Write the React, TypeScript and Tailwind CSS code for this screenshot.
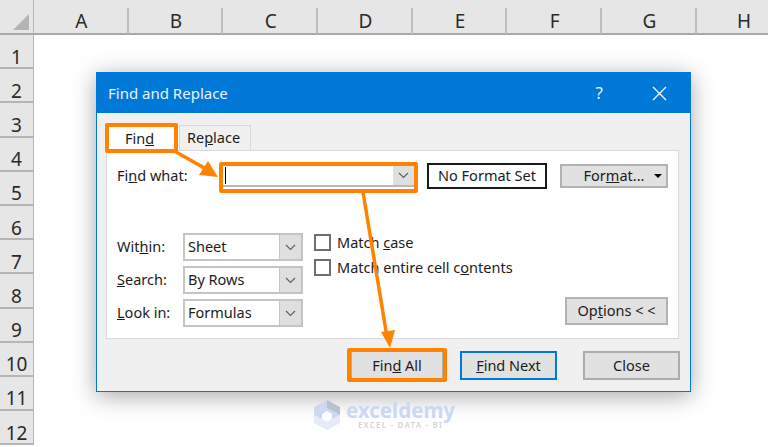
const FONT = "font-['Noto_Sans','Open_Sans',sans-serif]";

const COLS = ["A", "B", "C", "D", "E", "F", "G", "H"];
const ROWS = ["1", "2", "3", "4", "5", "6", "7", "8", "9", "10", "11", "12"];

function Chevron() {
  return (
    <svg width="11" height="7" viewBox="0 0 11 7" fill="none" stroke="#606060" strokeWidth="1.2">
      <path d="M1 1l4.5 4.5L10 1" />
    </svg>
  );
}

function Combo({ value }: { value: string }) {
  return (
    <div className="flex h-[28px] w-[120px] border-2 border-[#c4c4c4] bg-white">
      <div className="flex flex-1 items-center border-r border-[#c4c4c4] pl-[3px] text-[14.5px] text-[#1c1c1c]">{value}</div>
      <div className="flex w-[21px] items-center justify-center bg-[#dfdfdf]">
        <Chevron />
      </div>
    </div>
  );
}

function Check({ children }: { children: React.ReactNode }) {
  return (
    <div className="flex h-[17px] items-center gap-[6px] text-[14.5px] text-[#1c1c1c]">
      <div className="h-[17px] w-[17px] border-2 border-[#6f6f6f] bg-white" />
      <span className="whitespace-nowrap">{children}</span>
    </div>
  );
}

function Btn({ children, className }: { children: React.ReactNode; className: string }) {
  return (
    <div className={`flex items-center justify-center bg-[#e1e1e1] text-[14.5px] text-[#1c1c1c] ${className}`}>
      <span className="whitespace-nowrap">{children}</span>
    </div>
  );
}

function OptionRow({ label, value }: { label: React.ReactNode; value: string }) {
  return (
    <div className="flex items-center">
      <div className="w-[66px] text-[14.5px] text-[#1c1c1c]">{label}</div>
      <Combo value={value} />
    </div>
  );
}

export default function App() {
  return (
    <div className={`relative h-[447px] w-[768px] overflow-hidden bg-white ${FONT}`}>
      <div className="flex h-[35px] border-b-2 border-[#a9a9a9] bg-[#e6e6e6]">
        <div className="relative w-[34px] shrink-0 border-r border-[#b5b5b5]">
          <svg className="absolute left-[12px] top-[13px]" width="18" height="18" viewBox="0 0 18 18">
            <path d="M17 1v16H1z" fill="#b4b4b4" />
          </svg>
        </div>
        {COLS.map((c) => (
          <div key={c} className="flex w-[94.7px] shrink-0 items-center justify-center pt-[9px] text-[19px] leading-[24px] text-[#2a2a2a]">
            {c}
          </div>
        ))}
      </div>
      <div className="absolute left-[34px] top-[8px] flex h-[26px]">
        {COLS.map((c) => (
          <div key={c} className="h-full w-[94.7px] shrink-0 border-r-2 border-[#bdbdbd]" />
        ))}
      </div>

      <div className="flex w-[34px] flex-col">
        {ROWS.map((r) => (
          <div key={r} className="flex h-[34.2px] shrink-0 items-center justify-center border-b-2 border-r border-[#b5b5b5] bg-[#e6e6e6] pt-[11px] text-[19px] leading-[20px] text-[#2a2a2a]">
            {r}
          </div>
        ))}
      </div>

      {/* Dialog window */}
      <div className="absolute left-[96px] top-[72px] flex h-[320px] w-[595px] flex-col border border-[#0078d7] bg-[#f0f0f0] text-[#1c1c1c] shadow-[0_4px_22px_rgba(0,0,0,0.35)]">
        <div className="flex h-[40px] shrink-0 items-center bg-[#0078d7] pl-[11px] text-[15px] text-[#e8f2fb]">
          <span className="flex-1">Find and Replace</span>
          <span className="mr-[49px] text-[17px]">?</span>
          <svg className="mr-[23px]" width="15" height="15" viewBox="0 0 15 15" stroke="#f1f7fc" strokeWidth="1.4">
            <path d="M1 1l13 13M14 1L1 14" />
          </svg>
        </div>

        <div className="mt-[12px] flex h-[25px] shrink-0 pl-[10px]">
          <div className="flex w-[72px] items-center justify-center bg-white pr-[7px] pt-[2px] text-[14.5px]">
            <span>Fin<u>d</u></span>
          </div>
          <div className="flex w-[72px] items-center justify-center border border-b-0 border-[#d9d9d9] pr-[3px] text-[14.5px]">
            <span>Re<u>p</u>lace</span>
          </div>
        </div>

        <div className="ml-[9px] mr-[11px] flex h-[189px] shrink-0 flex-col border border-[#d9d9d9] bg-white pl-[10px] pt-[12px]">
          <div className="flex h-[26px] items-center">
            <div className="w-[102px] text-[14.5px]">Fi<u>n</u>d what:</div>
            <div className="flex h-[22px] w-[195px] border-b-2 border-[#b9b9b9]">
              <div className="flex flex-1 items-center pl-[6px]">
                <div className="h-[17px] w-px bg-black" />
              </div>
              <div className="flex w-[21px] items-center justify-center bg-[#dfdfdf]">
                <Chevron />
              </div>
            </div>
            <div className="ml-[13px] flex h-[26px] w-[120px] items-center justify-center border-2 border-[#1a1a1a] text-[14.5px]">
              No Format Set
            </div>
            <div className="relative ml-[13px] flex h-[24px] w-[108px] items-center justify-center border-2 border-[#b3b3b3] bg-[#e1e1e1] text-[14.5px]">
              <span>For<u>m</u>at...</span>
              <div className="absolute right-[4px] top-[8px] border-x-[4px] border-t-[4px] border-x-transparent border-t-black" />
            </div>
          </div>

          <div className="mt-[44px] flex">
            <div className="flex flex-col gap-[5px]">
              <OptionRow label={<span>Wit<u>h</u>in:</span>} value="Sheet" />
              <OptionRow label={<span><u>S</u>earch:</span>} value="By Rows" />
              <OptionRow label={<span><u>L</u>ook in:</span>} value="Formulas" />
            </div>
            <div className="ml-[11px] flex flex-col gap-[8px] pt-[1px]">
              <Check>Match <u>c</u>ase</Check>
              <Check>Match entire cell c<u>o</u>ntents</Check>
            </div>
            <div className="ml-auto mr-[10px] mt-[64px]">
              <Btn className="h-[28px] w-[103px] border-2 border-[#b3b3b3]">Op<u>t</u>ions &lt; &lt;</Btn>
            </div>
          </div>
        </div>

        <div className="mt-[12px] flex pl-[254px]">
          <Btn className="h-[29px] w-[92px] border border-[#adadad]">Fin<u>d</u> All</Btn>
          <Btn className="ml-[17px] h-[29px] w-[97px] border-2 border-[#0078d7]"><u>F</u>ind Next</Btn>
          <Btn className="ml-[26px] h-[29px] w-[97px] border-2 border-[#adadad]">Close</Btn>
        </div>
      </div>

      {/* Orange callouts */}
      <div className="absolute left-[105px] top-[123px] h-[30px] w-[73px] rounded-[2px] border-[4px] border-[#ff8300]" />
      <div className="absolute left-[219px] top-[162px] h-[31px] w-[199px] rounded-[2px] border-[4px] border-[#ff8300]" />
      <div className="absolute left-[347px] top-[348px] h-[34px] w-[100px] rounded-[2px] border-[4px] border-[#ff8300]" />
      <svg className="absolute left-0 top-0" width="768" height="447" viewBox="0 0 768 447" fill="none">
        <path d="M176 152l32 18" stroke="#ff8300" strokeWidth="3.5" />
        <path d="M218 177l-19-2 9-14z" fill="#ff8300" />
        <path d="M363 192l24 145" stroke="#ff8300" strokeWidth="3.5" />
        <path d="M390 348l-9-16 14-2z" fill="#ff8300" />
      </svg>

      {/* Watermark */}
      <div className="absolute left-[313px] top-[399px] flex items-center gap-[5px]">
        <svg width="28" height="32" viewBox="0 0 28 32">
          <path d="M14 1l13 7v8l-13 7-13-7V8z" fill="#cdd8f2" />
          <path d="M14 1l13 7v8l-7-4-6-3z" fill="#bcc1cf" />
          <path d="M1 16l13 7 13-7v8l-13 7-13-7z" fill="#e4eaf8" />
          <path d="M14 12l5 3v5l-5 3-5-3v-5z" fill="#fbfcfe" />
        </svg>
        <div className="flex flex-col items-center">
          <span className="text-[20.5px] font-bold leading-[20px] text-[#ccd8f3]">exceldemy</span>
          <span className="text-[8px] font-semibold leading-[10px] tracking-[1.2px] text-[#d4d4d4]">EXCEL - DATA - BI</span>
        </div>
      </div>
    </div>
  );
}
